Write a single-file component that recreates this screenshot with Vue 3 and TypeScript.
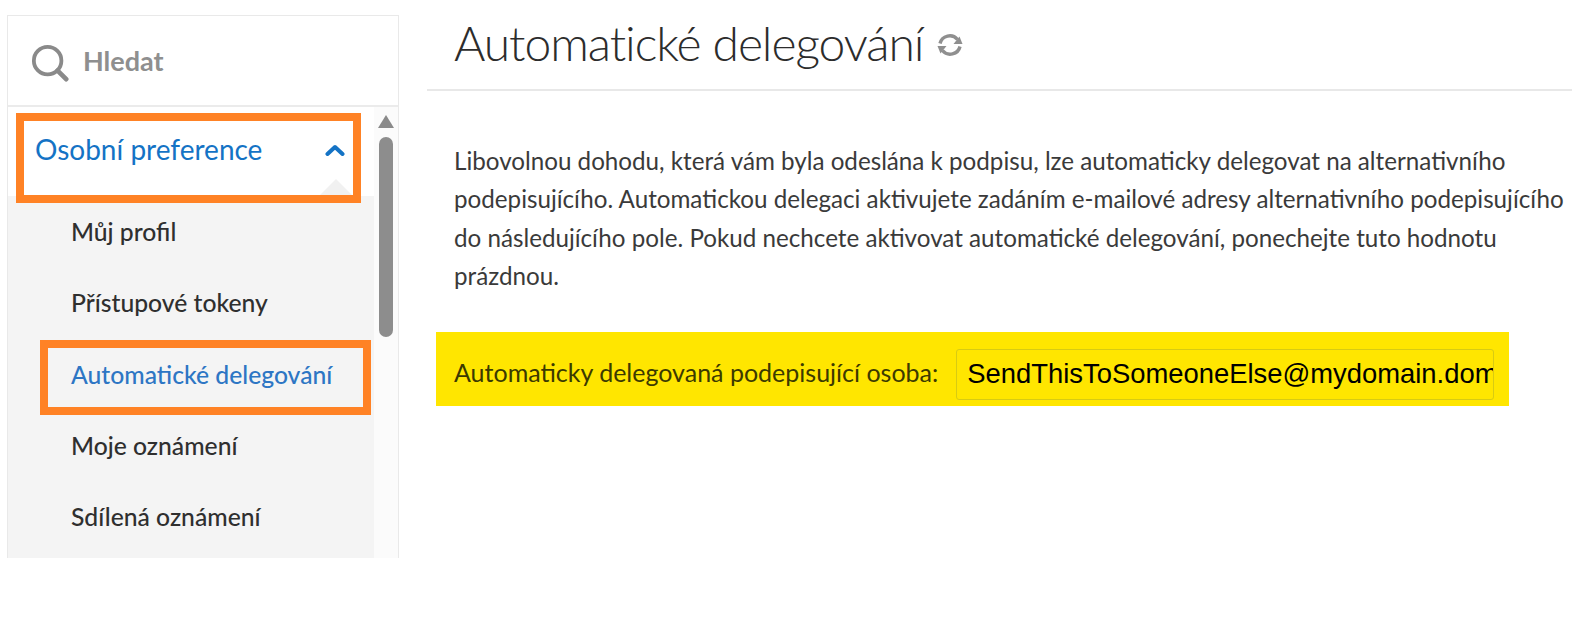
<script setup lang="ts">
const items = ['Můj profil', 'Přístupové tokeny', 'Automatické delegování', 'Moje oznámení', 'Sdílená oznámení']
const activeItem = 'Automatické delegování'
</script>

<template>
  <div class="page">
    <aside class="sidebar">
      <div class="search">
        <svg class="search-icon" viewBox="0 0 40 40" width="38" height="38" fill="none" stroke="#8a8a8a" stroke-linecap="round">
          <circle cx="17.5" cy="17.5" r="14.5" stroke-width="4" />
          <path d="M28 28 L37 37" stroke-width="5" />
        </svg>
        <span class="search-label">Hledat</span>
      </div>
      <div class="menu-area">
        <div class="menu">
          <div class="menu-head">
            <span>Osobní preference</span>
            <svg class="chevron" viewBox="0 0 20 12" width="20" height="12" fill="none" stroke="#1473c5" stroke-width="4" stroke-linecap="round" stroke-linejoin="round">
              <path d="M2.5 10 L10 3 L17.5 10" />
            </svg>
          </div>
          <ul class="sub">
            <li v-for="item in items" :key="item" :class="{ active: item === activeItem }">{{ item }}</li>
          </ul>
          <div class="notch"></div>
          <div class="mark mark-head"></div>
          <div class="mark mark-item"></div>
        </div>
        <div class="scrollbar">
          <div class="arrow"></div>
          <div class="thumb"></div>
        </div>
      </div>
    </aside>
    <main class="main">
      <header class="title-bar">
        <h1>Automatické delegování</h1>
        <svg class="sync" viewBox="0 0 28 28" width="28" height="28" fill="none" stroke="#8f8f8f" stroke-width="3.4">
          <path d="M4 12.5 A10 10 0 0 1 21.5 8.5" />
          <path d="M24 15.5 A10 10 0 0 1 6.5 19.5" />
          <path d="M26.5 13 L17.5 13 L23.5 5.5 Z" fill="#8f8f8f" stroke="none" />
          <path d="M1.5 15 L10.5 15 L4.5 22.5 Z" fill="#8f8f8f" stroke="none" />
        </svg>
      </header>
      <p class="intro">Libovolnou dohodu, která vám byla odeslána k podpisu, lze automaticky delegovat na alternativního podepisujícího. Automatickou delegaci aktivujete zadáním e-mailové adresy alternativního podepisujícího do následujícího pole. Pokud nechcete aktivovat automatické delegování, ponechejte tuto hodnotu prázdnou.</p>
      <div class="delegate">
        <label for="delegate-input">Automaticky delegovaná podepisující osoba:</label>
        <input id="delegate-input" type="text" value="SendThisToSomeoneElse@mydomain.domain.com" readonly />
      </div>
    </main>
  </div>
</template>

<style>
html, body { margin: 0; background: #fff; }
</style>

<style scoped>
.page {
  width: 1572px;
  height: 617px;
  display: flex;
  align-items: flex-start;
  overflow: hidden;
  background: #fff;
  font-family: Lato, "Noto Sans", sans-serif;
  color: #2c2c2c;
}
.sidebar {
  width: 392px;
  height: 543px;
  margin: 15px 0 0 7px;
  flex: none;
  box-sizing: border-box;
  border: 1px solid #e9e9e9;
  border-bottom: 0;
  overflow: hidden;
}
.search {
  height: 91px;
  box-sizing: border-box;
  border-bottom: 2px solid #ebebeb;
  display: flex;
  align-items: center;
  padding-left: 23px;
  gap: 14px;
}
.search-icon { margin-top: 4px; }
.search-label {
  font-size: 27px;
  font-weight: 700;
  color: #8f8f8f;
}
.menu-area {
  display: flex;
  height: 451px;
}
.menu {
  position: relative;
  width: 366px;
  flex: none;
}
.menu-head {
  height: 89px;
  box-sizing: border-box;
  background: #fff;
  display: flex;
  align-items: flex-start;
  justify-content: space-between;
  padding: 25px 29px 0 27px;
  font-size: 28px;
  color: #1473c5;
}
.chevron { margin-top: 12px; }
.sub {
  list-style: none;
  margin: 0;
  padding: 0 0 0 63px;
  background: #f4f4f4;
  height: 362px;
  font-size: 24.7px;
  font-weight: 500;
}
.sub li {
  height: 71.3px;
  line-height: 71.3px;
  color: #2f2f2f;
}
.sub li.active { color: #2d76c4; }
.notch {
  position: absolute;
  left: 311px;
  top: 72px;
  width: 0;
  height: 0;
  border-left: 17px solid transparent;
  border-right: 17px solid transparent;
  border-bottom: 17px solid #f1f1f1;
}
.mark {
  position: absolute;
  box-sizing: border-box;
  border: 8px solid #ff8225;
}
.mark-head { left: 8px; top: 6px; width: 345px; height: 90px; }
.mark-item { left: 32px; top: 233px; width: 331px; height: 75px; }
.scrollbar {
  width: 24px;
  flex: none;
  background: #fbfbfb;
  display: flex;
  flex-direction: column;
  align-items: center;
  padding-top: 8px;
  box-sizing: border-box;
}
.arrow {
  width: 0;
  height: 0;
  border-left: 8px solid transparent;
  border-right: 8px solid transparent;
  border-bottom: 13px solid #8a8a8a;
}
.thumb {
  width: 14px;
  height: 200px;
  margin-top: 9px;
  border-radius: 7px;
  background: #8d8d8d;
}
.main {
  margin-left: 28px;
  width: 1145px;
  flex: none;
}
.title-bar {
  height: 91px;
  box-sizing: border-box;
  border-bottom: 2px solid #e8e8e8;
  display: flex;
  align-items: flex-start;
  padding: 10px 0 0 27px;
  gap: 13px;
}
h1 {
  margin: 0;
  font-size: 48px;
  letter-spacing: -1.05px;
  line-height: 66px;
  font-weight: 300;
  color: #2c2c2c;
}
.sync { margin-top: 21px; }
.intro {
  margin: 51px 0 0 27px;
  width: 1110px;
  font-size: 24.2px;
  line-height: 38.4px;
  color: #3a3a3a;
}
.delegate {
  margin: 36px 0 0 9px;
  width: 1073px;
  height: 74px;
  box-sizing: border-box;
  background: #ffe600;
  display: flex;
  align-items: flex-start;
  padding: 17px 0 0 18px;
  gap: 18px;
  font-size: 25px;
  color: #3c3a00;
}
.delegate label { white-space: nowrap; padding-top: 8px; }
.delegate input {
  width: 538px;
  height: 51px;
  box-sizing: border-box;
  flex: none;
  background: transparent;
  border: 1px solid #d8cb12;
  border-radius: 3px;
  padding: 0 0 0 10px;
  font-family: "Liberation Sans", Arial, sans-serif;
  font-size: 27.4px;
  color: #000;
  outline: none;
}
</style>
